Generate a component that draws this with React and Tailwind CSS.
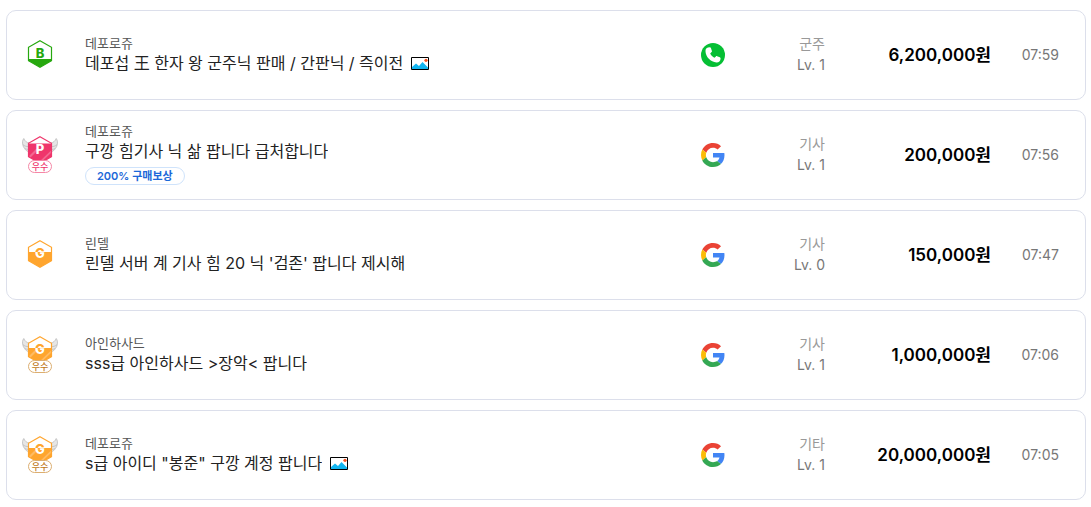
const items = [
  {
    id: 1,
    grade: 'bronze',
    excellent: false,
    server: '데포로쥬',
    title: '데포섭 王 한자 왕 군주닉 판매 / 간판닉 / 즉이전',
    hasImage: true,
    login: 'phone',
    job: '군주',
    level: 1,
    price: '6,200,000',
    time: '07:59',
  },
  {
    id: 2,
    grade: 'platinum',
    excellent: true,
    server: '데포로쥬',
    title: '구깡 힘기사 닉 삶 팝니다 급처합니다',
    reward: '200% 구매보상',
    login: 'google',
    job: '기사',
    level: 1,
    price: '200,000',
    time: '07:56',
  },
  {
    id: 3,
    grade: 'gold',
    excellent: false,
    server: '린델',
    title: "린델 서버 계 기사 힘 20 닉 '검존' 팝니다 제시해",
    login: 'google',
    job: '기사',
    level: 0,
    price: '150,000',
    time: '07:47',
  },
  {
    id: 4,
    grade: 'gold',
    excellent: true,
    server: '아인하사드',
    title: 'sss급 아인하사드 >장악< 팝니다',
    login: 'google',
    job: '기사',
    level: 1,
    price: '1,000,000',
    time: '07:06',
  },
  {
    id: 5,
    grade: 'gold',
    excellent: true,
    server: '데포로쥬',
    title: 's급 아이디 "봉준" 구깡 계정 팝니다',
    hasImage: true,
    login: 'google',
    job: '기타',
    level: 1,
    price: '20,000,000',
    time: '07:05',
  },
];

const HEX = 'M18 .8 29.5 7.3V20.7L18 27.2 6.500 20.7V7.3Z';

const grades = {
  bronze: { letter: 'B', color: '#27a80f', fill: 'M6.500 19H29.5V20.7L18 27.2 6.500 20.7Z' },
  platinum: { letter: 'P', color: '#ef356b', fill: 'M6.500 7.500H29.5V20.7L18 27.2 6.500 20.7Z' },
  gold: { letter: 'G', color: '#ffa52e', fill: 'M6.500 12H29.5V20.7L18 27.2 6.500 20.7Z' },
};

const Wing = () => (
  <>
    <path
      d="M1.800 2.500C.4 4.200.2 6.800.8 8.600 1 10.200 1.700 11.600 2.600 12.300 3.300 14 4.800 15.300 7 15.800V7C4.600 6.600 2.800 5 1.800 2.500Z"
      fill="#e6e6e6"
      stroke="#b4b4b4"
      strokeWidth=".7"
    />
    <path d="M.8 8.600C2.600 10.200 4.400 10.600 7 10.600M2.600 12.300C4 13.200 5.200 13.400 7 13.400" fill="none" stroke="#b4b4b4" strokeWidth=".7" />
  </>
);

const GradeBadge = ({ id, grade, excellent }) => {
  const { letter, color, fill } = grades[grade];
  const gradientId = `letter-${id}`;
  const letterFill = { bronze: color, platinum: '#fff', gold: `url(#${gradientId})` }[grade];

  return (
    <div className="flex flex-col items-center w-9 shrink-0 pb-0.5">
      <svg viewBox="0 0 36 28" className="w-9 h-7" aria-hidden="true">
        <defs>
          <linearGradient id={gradientId} gradientUnits="userSpaceOnUse" x1="0" y1="0" x2="0" y2="28">
            <stop offset=".43" stopColor={color} />
            <stop offset=".43" stopColor="#fff" />
          </linearGradient>
        </defs>
        {excellent && (
          <>
            <Wing />
            <g transform="matrix(-1 0 0 1 36 0)">
              <Wing />
            </g>
          </>
        )}
        <path d={HEX} fill="#fff" />
        <path d={fill} fill={color} />
        {excellent && (
          <path d="M7 20 14 13H17L8 22ZM17 26 29 14.500V17L20 25.500Z" fill="#fff" opacity=".25" />
        )}
        <path d={HEX} fill="none" stroke={color} strokeWidth="1.200" />
        <text
          x="18"
          y="18"
          textAnchor="middle"
          fill={letterFill}
          className="font-['Inter',sans-serif] text-[13px] font-extrabold"
        >
          {letter}
        </text>
      </svg>
      {excellent && (
        <span
          className={`-mt-1 relative w-6 h-[13px] flex items-center justify-center rounded-full border bg-white text-[9px] leading-none font-medium ${
            grade === 'platinum' ? 'border-[#f587a6] text-[#ef356b]' : 'border-[#dcae70] text-[#c07818]'
          }`}
        >
          우수
        </span>
      )}
    </div>
  );
};

const PhoneIcon = () => (
  <svg viewBox="0 0 24 24" className="w-6 h-6" role="img" aria-label="전화번호">
    <circle cx="12" cy="12" r="12" fill="#05bf34" />
    <path
      d="M7 4.500 8.900 4.300c.6 0 .9.3 1.100.9l.9 2.700c.2.5 0 .9-.3 1.200L9.200 10.500c1 2 2.400 3.400 4.300 4.300l1.400-1.400c.3-.3.8-.4 1.200-.2l2.700 1.100c.5.2.8.6.8 1.200-.1 2.700-1.900 4.100-4.100 4C9.700 19.200 4.600 13.900 4.500 8.300 4.400 6.200 5.300 4.800 7 4.500Z"
      fill="#fff"
    />
  </svg>
);

const GoogleIcon = () => (
  <svg viewBox="0 0 48 48" className="w-6 h-6" role="img" aria-label="구글">
    <path fill="#EA4335" d="M24 9.500c3.540 0 6.710 1.220 9.210 3.600l6.850-6.850C35.900 2.380 30.470 0 24 0 14.620 0 6.510 5.380 2.560 13.220l7.980 6.190C12.430 13.720 17.740 9.500 24 9.500z" />
    <path fill="#4285F4" d="M46.980 24.550c0-1.570-.15-3.090-.38-4.550H24v9.020h12.940c-.58 2.960-2.260 5.480-4.780 7.180l7.730 6c4.510-4.180 7.090-10.360 7.090-17.650z" />
    <path fill="#FBBC05" d="M10.530 28.590c-.48-1.450-.76-2.990-.76-4.590s.27-3.140.76-4.590l-7.980-6.190C.92 16.460 0 20.120 0 24c0 3.880.92 7.540 2.560 10.780l7.970-6.190z" />
    <path fill="#34A853" d="M24 48c6.480 0 11.930-2.130 15.890-5.810l-7.730-6c-2.150 1.450-4.920 2.300-8.160 2.300-6.260 0-11.570-4.220-13.470-9.910l-7.980 6.190C6.510 42.620 14.620 48 24 48z" />
  </svg>
);

const PictureIcon = () => (
  <svg viewBox="0 0 18 13" className="w-[18px] h-[13px] shrink-0" role="img" aria-label="이미지 첨부">
    <path d="M.5.5h17v12H.5Z" fill="#fff" stroke="#000" />
    <path d="M1 12V10L5 6.500 8 9 11.500 5 17 10.500V12Z" fill="#13b5f0" />
    <circle cx="15" cy="3.300" r="1.600" fill="#f4511e" />
  </svg>
);

const TradeItem = ({ item }) => (
  <li>
    <a
      href="#"
      className="flex items-center h-[90px] pl-[15px] pr-[26px] rounded-[10px] border border-[#dcdfeb] bg-white"
    >
      <GradeBadge id={item.id} grade={item.grade} excellent={item.excellent} />

      <div className="flex-1 min-w-0 ml-[27px] pb-1">
        <p className="text-[13px] leading-5 text-[#555]">{item.server}</p>
        <div className="flex items-center gap-2">
          <p className="text-base leading-5 text-[#222] truncate">{item.title}</p>
          {item.hasImage && <PictureIcon />}
        </div>
        {item.reward && (
          <span className="mt-1.5 w-fit h-[18px] px-[11px] flex items-center rounded-full border border-[#cfe3fb] text-[11px] leading-none font-semibold text-[#1c68d8]">
            {item.reward}
          </span>
        )}
      </div>

      <div className="w-6 shrink-0">
        {item.login === 'phone' ? <PhoneIcon /> : <GoogleIcon />}
      </div>

      <div className="w-[100px] shrink-0 pb-0.5 text-right text-sm leading-[21px]">
        <p className="text-[#999]">{item.job}</p>
        <p className="text-[#777]">Lv. {item.level}</p>
      </div>

      <p className="w-[166px] shrink-0 pt-0.5 text-right text-[17px] font-semibold text-black">
        {item.price}원
      </p>
      <p className="w-[68px] shrink-0 text-right text-sm text-[#777]">{item.time}</p>
    </a>
  </li>
);

const App = () => (
  <main className="pl-1.5 pr-[5px] py-2.5 bg-white font-['Inter','Noto_Sans_CJK_KR',sans-serif]">
    <ul className="flex flex-col gap-2.5">
      {items.map((item) => (
        <TradeItem key={item.id} item={item} />
      ))}
    </ul>
  </main>
);

export default App;
